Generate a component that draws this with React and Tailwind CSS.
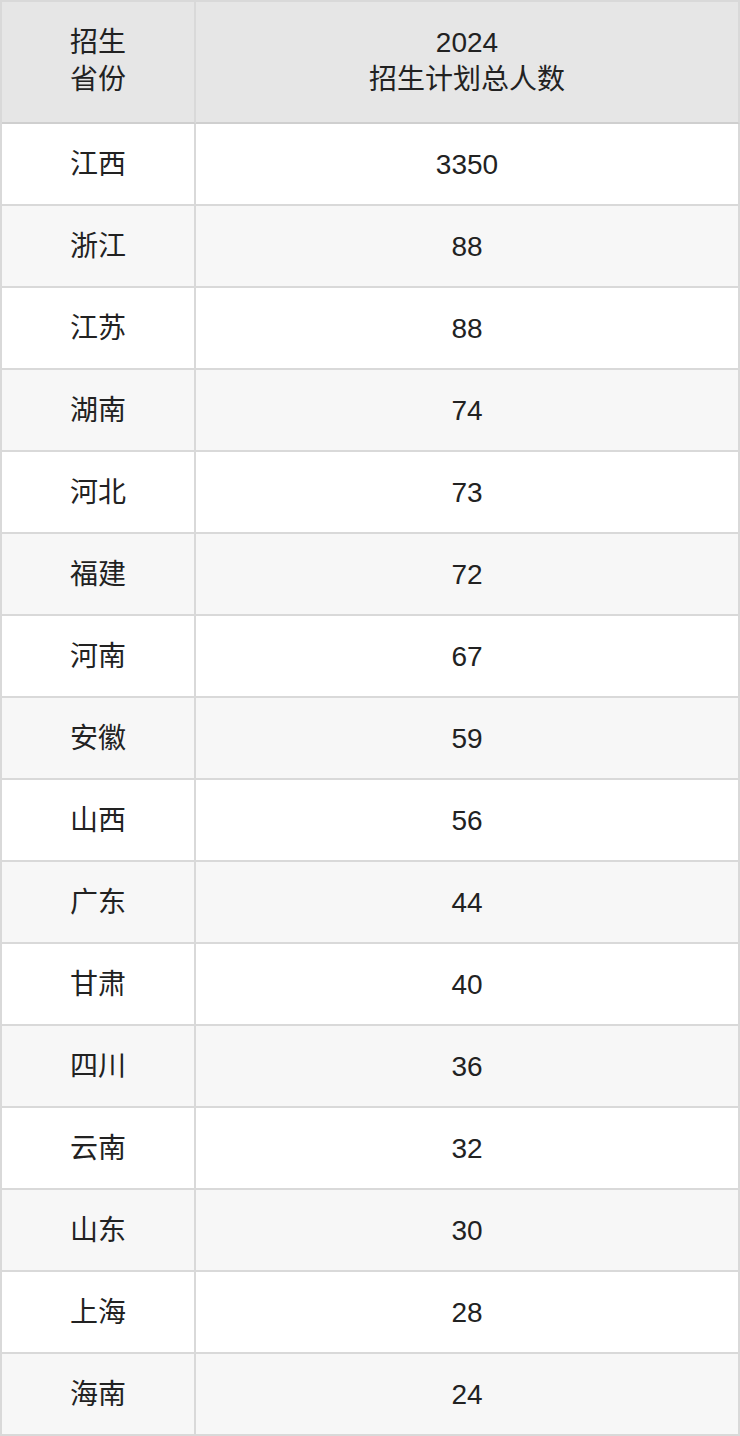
import React from 'react'

const rows = [
  ['江西', '3350'],
  ['浙江', '88'],
  ['江苏', '88'],
  ['湖南', '74'],
  ['河北', '73'],
  ['福建', '72'],
  ['河南', '67'],
  ['安徽', '59'],
  ['山西', '56'],
  ['广东', '44'],
  ['甘肃', '40'],
  ['四川', '36'],
  ['云南', '32'],
  ['山东', '30'],
  ['上海', '28'],
  ['海南', '24'],
]

const cell =
  'flex items-center justify-center text-center border-r-2 border-b-2 border-[#d9d9d9]'

const App = () => {
  return (
    <div
      className="w-[740px] bg-white text-[#222] text-[28px] leading-[37px]"
      style={{ fontFamily: '"Liberation Sans", "Noto Sans CJK SC", sans-serif' }}
    >
      <div className="grid grid-cols-[194px_1fr] border-t-2 border-l-2 border-[#d9d9d9]">
        <div className={`${cell} h-[122px] pb-[3px] bg-[#e6e6e6] border-b-[#cfcfcf]`}>
          招生
          <br />
          省份
        </div>
        <div className={`${cell} h-[122px] pb-[3px] bg-[#e6e6e6] border-b-[#cfcfcf]`}>
          2024
          <br />
          招生计划总人数
        </div>
        {rows.map(([province, count], i) => (
          <React.Fragment key={province + i}>
            <div className={`${cell} h-[82px] ${i % 2 ? 'bg-[#f7f7f7]' : 'bg-white'}`}>
              {province}
            </div>
            <div className={`${cell} h-[82px] ${i % 2 ? 'bg-[#f7f7f7]' : 'bg-white'}`}>
              {count}
            </div>
          </React.Fragment>
        ))}
      </div>
    </div>
  )
}

export default App
